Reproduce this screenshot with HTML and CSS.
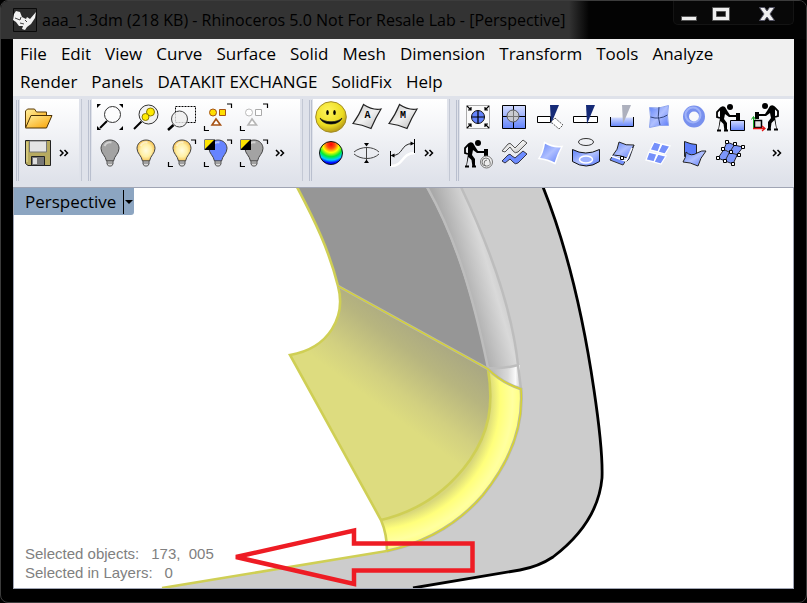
FILE: index.html
```html
<!DOCTYPE html>
<html lang="en">
<head>
<meta charset="utf-8">
<title>aaa_1.3dm (218 KB) - Rhinoceros 5.0</title>
<link rel="stylesheet" href="styles.css">
</head>
<body>
<svg class="defs" aria-hidden="true">
  <defs>
    <linearGradient id="blue" x1="0" y1="0" x2="1" y2="1"><stop offset="0" stop-color="#5f82f8"/><stop offset=".5" stop-color="#b0c0ff"/><stop offset="1" stop-color="#5878f8"/></linearGradient>
    <linearGradient id="blueDown" x1="0" y1="0" x2="0" y2="1"><stop offset="0" stop-color="#d3dcff"/><stop offset="1" stop-color="#6384fb"/></linearGradient>
    <linearGradient id="gray" x1="0" y1="0" x2="1" y2="1"><stop offset="0" stop-color="#c2c2c2"/><stop offset=".5" stop-color="#f2f2f2"/><stop offset="1" stop-color="#b5b5b5"/></linearGradient>
    <linearGradient id="folder" x1="0" y1="0" x2="1" y2="1"><stop offset="0" stop-color="#fff0a0"/><stop offset="1" stop-color="#f8a000"/></linearGradient>
    <radialGradient id="smile" cx=".4" cy=".3" r=".7"><stop offset="0" stop-color="#fff45c"/><stop offset=".7" stop-color="#ecdc20"/><stop offset="1" stop-color="#b99c18"/></radialGradient>
    <radialGradient id="rainbow" cx=".5" cy=".12" r=".9"><stop offset="0" stop-color="#f00"/><stop offset=".2" stop-color="#ff5010"/><stop offset=".4" stop-color="#ff0"/><stop offset=".6" stop-color="#0e3"/><stop offset=".76" stop-color="#0cf"/><stop offset=".9" stop-color="#00f"/></radialGradient>
    <radialGradient id="bulbYellow"><stop offset="0" stop-color="#fffbe0"/><stop offset=".6" stop-color="#fff0a6"/><stop offset="1" stop-color="#f6c55a"/></radialGradient>
    <symbol id="bulb" viewBox="0 0 36 36">
      <path d="M18 5c-5.500 0-9 4-9 8.500 0 5 4.500 7 5.500 12.500h7c1-5.500 5.500-7.500 5.500-12.500C27 9 23.500 5 18 5z" stroke="#444"/>
      <path d="M12.500 11c1.500-3.500 5-4 7-3.500" fill="none" stroke="#fff" stroke-opacity=".5" stroke-width="2"/>
      <path d="M15 26h6v3l-1.500 2h-3L15 29z" fill="#ddd" stroke="#555"/><path d="M15 28h6" stroke="#666"/>
    </symbol>
    <symbol id="corners" viewBox="0 0 36 36"><path d="M27 5h4.500v4M4.500 27v4.500H9" fill="none" stroke="#000" stroke-width="1.200"/></symbol>
    <symbol id="swap" viewBox="0 0 36 36"><path d="M4.500 4.500h10.500v10.500H4.500z" fill="#000"/><path d="M5 5h9l-9 9z" fill="#ffe500"/></symbol>
    <symbol id="worker" viewBox="0 0 36 36">
      <circle cx="18" cy="8" r="3"/>
      <path d="M8 9q2-3 5-1l3 5 2 3h7v2h-8l-4-3-1 5 3 4v8h-2.500l-1-7-3-3-2 10H6l2-13z"/><path d="M9 9l-4 4v5l3 1M5 31.500h4m3 0h4" fill="none" stroke="#000" stroke-width="1.800"/><path d="M24 14h4v7h-4z"/>
    </symbol>
  </defs>
</svg>

<div class="window">
  <header class="titlebar">
    <svg class="app-icon" viewBox="0 0 24 24" aria-hidden="true"><path d="M.5.500h23v23H.500z" fill="#2c2c2c" stroke="#0a0a0a"/><path d="M1 6l2-3 4 1 2 5 4 2 1-2 3 2 6-7-1 6-4 6-4 3-2 3-3-1 1-3-4 0-3-4-3-2z" fill="#f2f2f2"/><path d="M2 10l5 2 1-3M7 15l4 1M12 12l2 2" fill="none" stroke="#444"/></svg>
    <h1 class="title">aaa_1.3dm (218 KB) - Rhinoceros 5.0 Not For Resale Lab - [Perspective]</h1>
    <div class="controls">
      <button aria-label="Minimize"><svg viewBox="0 0 20 16"><path d="M2.500 10.500h15v4h-15z" fill="#eee" stroke="#555"/></svg></button>
      <button aria-label="Maximize"><svg viewBox="0 0 20 16"><path d="M1.500 1.500h17v13h-17zM5.500 5.500v5h9v-5z" fill="#eee" fill-rule="evenodd" stroke="#555"/></svg></button>
      <button class="close" aria-label="Close"><svg viewBox="0 0 20 16"><path d="M2.500 1.500h5L10 5l2.500-3.500h5L13 8l4.500 6.500h-5L10 11l-2.500 3.500h-5L7 8z" fill="#eee" stroke="#556"/></svg></button>
    </div>
  </header>

  <main class="client">
    <nav class="menu" aria-label="Main menu">
      <div class="menu-row"><button>File</button><button>Edit</button><button>View</button><button>Curve</button><button>Surface</button><button>Solid</button><button>Mesh</button><button>Dimension</button><button>Transform</button><button>Tools</button><button>Analyze</button></div>
      <div class="menu-row"><button>Render</button><button>Panels</button><button>DATAKIT EXCHANGE</button><button>SolidFix</button><button>Help</button></div>
    </nav>

    <div class="toolbars">
      <section class="group" aria-label="File tools">
        <div class="panel panel-file">
          <div class="tool-row">
            <button class="tool" aria-label="Open"><svg viewBox="0 0 36 36"><path d="M5.500 28V12l2-2h7l2 3h10v4" fill="url(#folder)" stroke="#5a3b08"/><path d="M11 16.500h21L26.500 29H5.500z" fill="url(#folder)" stroke="#4a3005"/></svg></button>
          </div>
          <div class="tool-row">
            <button class="tool" aria-label="Save"><svg viewBox="0 0 36 36"><path d="M5.500 5.500h25v25H8l-2.500-2z" fill="#b7aa60" stroke="#222"/><path d="M9.500 6h17v11h-17z" fill="#e4e4e4" stroke="#777"/><path d="M11.500 21.500h13v9h-13z" fill="#777" stroke="#222"/><path d="M13 23h4v6h-4z" fill="#ddd"/><path d="M7 7v20" stroke="#eee395"/></svg></button>
            <button class="more" aria-label="More file tools"><svg viewBox="0 0 16 12"><path d="M4 3l3 3-3 3M8.500 3l3 3-3 3"/></svg></button>
          </div>
        </div>
      </section>

      <section class="group" aria-label="View tools">
        <div class="panel panel-view">
          <div class="tool-row">
            <button class="tool" aria-label="Zoom extents"><svg viewBox="0 0 36 36"><path d="M5 5h4l-4 4zM27 5h4v4zM5 27v4h4zM31 27v4h-4z"/><path d="M15 22l-7 7" stroke="#000" stroke-width="2"/><circle cx="20.500" cy="15.500" r="8" fill="#fff" fill-opacity=".6" stroke="#333"/></svg></button>
            <button class="tool" aria-label="Zoom selected"><svg viewBox="0 0 36 36"><path d="M13.500 22.500L6 30" stroke="#000" stroke-width="2"/><circle cx="20.500" cy="15.500" r="9.500" fill="#f1f1f1" stroke="#333"/><circle cx="22.500" cy="13" r="4" fill="#ffeb00" stroke="#8b7a00"/><circle cx="17.500" cy="18" r="3.500" fill="#ffeb00" stroke="#8b7a00"/></svg></button>
            <button class="tool" aria-label="Zoom window"><svg viewBox="0 0 36 36"><path d="M11.500 7.500h20v16h-20z" fill="none" stroke="#000" stroke-dasharray="2 1"/><path d="M9.500 26L4 31" stroke="#000" stroke-width="2.500"/><circle cx="15.500" cy="20" r="8" fill="#eee" fill-opacity=".8" stroke="#444"/></svg></button>
            <button class="tool" aria-label="Select objects"><svg viewBox="0 0 36 36"><circle cx="13" cy="13.500" r="3.500" fill="#ffde00" stroke="#a65315"/><path d="M19.500 10.500h6v6h-6z" fill="#ffde00" stroke="#a65315"/><path d="M16 20l-4 6h8.500z" fill="#fff" stroke="#a65315" stroke-width="1.600"/><use href="#corners"/></svg></button>
            <button class="tool" aria-label="Deselect objects"><svg viewBox="0 0 36 36"><circle cx="13" cy="13.500" r="3.500" fill="#fff" stroke="#bbb"/><path d="M19.500 10.500h6v6h-6z" fill="#fff" stroke="#aaa"/><path d="M16 20l-4 6h8.500z" fill="#fff" stroke="#b5b5b5" stroke-width="1.600"/><use href="#corners"/></svg></button>
          </div>
          <div class="tool-row">
            <button class="tool" aria-label="Hide"><svg viewBox="0 0 36 36" fill="#a3a3a3"><use href="#bulb"/></svg></button>
            <button class="tool" aria-label="Show"><svg viewBox="0 0 36 36" fill="url(#bulbYellow)"><use href="#bulb"/></svg></button>
            <button class="tool" aria-label="Show selected"><svg viewBox="0 0 36 36" fill="url(#bulbYellow)"><use href="#bulb"/><use href="#corners"/></svg></button>
            <button class="tool" aria-label="Swap hidden"><svg viewBox="0 0 36 36" fill="#6684ff"><use href="#bulb"/><use href="#swap"/><use href="#corners"/></svg></button>
            <button class="tool" aria-label="Isolate"><svg viewBox="0 0 36 36" fill="#a3a3a3"><use href="#bulb"/><use href="#swap"/><use href="#corners"/></svg></button>
            <button class="more" aria-label="More view tools"><svg viewBox="0 0 16 12"><path d="M4 3l3 3-3 3M8.500 3l3 3-3 3"/></svg></button>
          </div>
        </div>
      </section>

      <section class="group" aria-label="Analysis tools">
        <div class="panel panel-analysis">
          <div class="tool-row">
            <button class="tool" aria-label="Smiley"><svg viewBox="0 0 36 36"><circle cx="18" cy="18" r="15.300" fill="url(#smile)" stroke="#a28b25"/><ellipse cx="14.500" cy="13.500" rx="1.300" ry="2.500"/><ellipse cx="21.500" cy="13.500" rx="1.300" ry="2.500"/><path d="M7 19c3 8 19 8 22 0-4 5-18 5-22 0z" stroke="#222" stroke-width=".800"/></svg></button>
            <button class="tool" aria-label="Surface A"><svg viewBox="0 0 36 36"><path d="M14.500 5.500q9 6 17.500 4.500-5 8-10 19.500-9-4-18-5 6-8 10.500-19z" fill="url(#gray)" stroke="#222" stroke-width="1.200"/><text x="18.500" y="19" class="glyph">A</text></svg></button>
            <button class="tool" aria-label="Surface M"><svg viewBox="0 0 36 36"><path d="M14.500 5.500q9 6 17.500 4.500-5 8-10 19.500-9-4-18-5 6-8 10.500-19z" fill="url(#gray)" stroke="#222" stroke-width="1.200"/><text x="18" y="19" class="glyph">M</text></svg></button>
          </div>
          <div class="tool-row">
            <button class="tool" aria-label="Color analysis"><svg viewBox="0 0 36 36"><circle cx="18" cy="18" r="11.500" fill="url(#rainbow)" stroke="#111"/></svg></button>
            <button class="tool" aria-label="Thickness"><svg viewBox="0 0 36 36"><path d="M5 17c7-6 19-6 25 0M5 19c7 6 19 6 25 0M17.500 12v13" fill="none" stroke="#444"/><path d="M15 8h5l-2.500 3.500zM15 28h5l-2.500-3.500z"/></svg></button>
            <button class="tool" aria-label="Length"><svg viewBox="0 0 36 36"><path d="M6 31c13 0 10-13 24-13" fill="none" stroke="#fff" stroke-width="2.500"/><path d="M5.500 16v15M29.500 4v14" stroke="#000"/><path d="M7 20.500c12 0 8-12 21-12" fill="none" stroke="#222"/><path d="M5.500 20.500l4-2v4zM29.500 8.500l-4-2v4z"/></svg></button>
            <button class="more" aria-label="More analysis tools"><svg viewBox="0 0 16 12"><path d="M4 3l3 3-3 3M8.500 3l3 3-3 3"/></svg></button>
          </div>
        </div>
      </section>

      <section class="group group-wide" aria-label="Surface tools">
        <div class="panel panel-surface">
          <div class="tool-row">
            <button class="tool" aria-label="Center"><svg viewBox="0 0 36 36"><path d="M6.500 6.500h23v23h-23z" fill="#fafafa" stroke="#aaa"/><circle cx="18" cy="18" r="6.500" fill="#6484fc" stroke="#111"/><path d="M11.500 18h13M18 11.500v13M7 7l4 4m0-3v3H8M29 7l-4 4m0-3v3h3M7 29l4-4m-3 0h3v3M29 29l-4-4m3 0h-3v3" fill="none" stroke="#000" stroke-width="1.200"/></svg></button>
            <button class="tool" aria-label="Split view"><svg viewBox="0 0 36 36"><path d="M6.500 6.500h23v23h-23z" fill="url(#blueDown)" stroke="#000"/><path d="M6 17.500h24M17.500 6v24" stroke="#000"/><circle cx="17" cy="17" r="6" fill="#ccc" fill-opacity=".9" stroke="#555"/><path d="M11 17.500h12M17.500 11v12" stroke="#777"/></svg></button>
            <button class="tool" aria-label="Trim"><svg viewBox="0 0 36 36"><path d="M5.500 17.500h13v6h-13z" fill="#fff" stroke="#000"/><path d="M18 6h9l-8 19z" fill="#152a77"/><path d="M23 19l8 7-4 4-8-7z" fill="#fff" stroke="#555" stroke-dasharray="2 1"/></svg></button>
            <button class="tool" aria-label="Split"><svg viewBox="0 0 36 36"><path d="M5.500 17.500h24v6h-24z" fill="#fff" stroke="#000"/><path d="M18 6h9l-8 19z" fill="#152a77"/></svg></button>
            <button class="tool" aria-label="Untrim"><svg viewBox="0 0 36 36"><path d="M6.500 18.500h23v9h-23z" fill="url(#blueDown)"/><path d="M6.500 18v9.500h23V18" fill="none" stroke="#000"/><path d="M18 6h9l-8 19z" fill="#adb0bd"/></svg></button>
            <button class="tool" aria-label="Surface from curves"><svg viewBox="0 0 36 36"><path d="M9.500 8.500q9 2 19-2-2 10 0 20-9-1-19 2 2-11 0-20z" fill="url(#blue)" stroke="#8fa5ee"/><path d="M19 8q-2 10 1 18M10.500 18q9 3 17-2" fill="none" stroke="#33457a"/></svg></button>
            <button class="tool" aria-label="Torus"><svg viewBox="0 0 36 36"><circle cx="18" cy="17.500" r="8" fill="none" stroke="#7890ee" stroke-width="6"/><circle cx="17" cy="16" r="7.500" fill="none" stroke="#b9c9ff" stroke-opacity=".6" stroke-width="2"/></svg></button>
            <button class="tool" aria-label="Build box"><svg viewBox="0 0 36 36"><use href="#worker"/><path d="M18.500 21.500h14v10h-14z" fill="url(#blueDown)" stroke="#000"/></svg></button>
            <button class="tool" aria-label="Move origin"><svg viewBox="0 0 36 36"><g transform="translate(35 -1) scale(-1 1)"><use href="#worker" width="36" height="36"/></g><path d="M6.500 21.500h7v7h-7z" fill="#e2e2e2" stroke="#000" stroke-width="1.500"/><path d="M5.500 30V18m-2 2.500l2-3 2 3" fill="none" stroke="#18a825"/><path d="M5 29.500h12m-3-2.500l3 2.500-3 2.500" fill="none" stroke="#e31313" stroke-width="1.300"/></svg></button>
          </div>
          <div class="tool-row">
            <button class="tool" aria-label="Drill"><svg viewBox="0 0 36 36"><use href="#worker"/><circle cx="26.500" cy="27" r="6" fill="#eee" stroke="#777"/><path d="M26 31a4 4 0 1 1 4-4a3 3 0 1 1-3-2" fill="none" stroke="#777"/></svg></button>
            <button class="tool" aria-label="Match"><svg viewBox="0 0 36 36"><path d="M6 16l6-7q2-2 4 1l3 3 8-8 4 3-9 9q-3 2-5-1l-3-4-5 5z" fill="url(#gray)" stroke="#555"/><path d="M6 26l6-6q2-2 4 1l3 2 8-7 4 3-9 9q-3 2-5-1l-3-3-5 4z" fill="#6d8cff" stroke="#334"/></svg></button>
            <button class="tool" aria-label="Patch"><svg viewBox="0 0 36 36"><path d="M12.500 7.500q8 5 17.500 4-4 7-7 17-7-4-16-5 4-6 5.500-16z" fill="url(#blue)" stroke="#fff" stroke-width="1.500"/></svg></button>
            <button class="tool" aria-label="Project curve"><svg viewBox="0 0 36 36"><ellipse cx="18" cy="7" rx="7.500" ry="3.500" fill="none" stroke="#333"/><path d="M4.500 14.500q13 7 27 0v12q-13 9-27 0z" fill="url(#blue)" stroke="#111"/><ellipse cx="18" cy="24.500" rx="6.500" ry="3.500" fill="#9db1ff" stroke="#fff" stroke-width="1.500"/></svg></button>
            <button class="tool" aria-label="Blend surface"><svg viewBox="0 0 36 36"><path d="M15 7q7 4 15 3l-7 13q-7-3-14-3 5-5 6-13z" fill="url(#blue)" stroke="#222"/><path d="M9 20l-3 5 13 5 3-5M30 10l-5 14-3 3" fill="#7390fa" stroke="#333"/><path d="M7 21l15 5 6-13" fill="none" stroke="#fff" stroke-width="1.500"/><path d="M16.500 21.500h3v3h-3z" fill="#fff" stroke="#000"/></svg></button>
            <button class="tool" aria-label="Split patches"><svg viewBox="0 0 36 36"><path d="M14 7l7 2-3 8-8-2zM22 9l8 2-5 8-7-2zM9 17l8 2-3 8-8-2zM18 19l8 2-5 8-7-2z" fill="#7590fb" stroke="#fff" stroke-width="1.300"/></svg></button>
            <button class="tool" aria-label="Fold surface"><svg viewBox="0 0 36 36"><path d="M8.500 6.500q7 3 12 3v12H8.500z" fill="#5d7efb" stroke="#222"/><path d="M10 17q5 5 11 1 5-3 9-2-6 7-8 15-8-4-15-4 3-4 3-10z" fill="url(#blue)" stroke="#222"/></svg></button>
            <button class="tool" aria-label="Control points"><svg viewBox="0 0 36 36"><path d="M15 7q8 4 16 5-6 6-10 17-8-3-15-6 6-7 9-16zM11 14q8 5 16 6M23 9q-6 8-10 17" fill="#7c96fb" stroke="#223"/><path d="M13.500 5.500h3v3h-3zM21.500 7.500h3v3h-3zM29.500 10.500h3v3h-3zM9.500 12.500h3v3h-3zM17.500 15.500h3v3h-3zM25.500 18.500h3v3h-3zM4.500 21.500h3v3h-3zM11.500 24.500h3v3h-3zM19.500 27.500h3v3h-3z" fill="#fff" stroke="#000"/></svg></button>
            <button class="more more-end" aria-label="More surface tools"><svg viewBox="0 0 16 12"><path d="M4 3l3 3-3 3M8.500 3l3 3-3 3"/></svg></button>
          </div>
        </div>
      </section>
    </div>

    <section class="viewport" aria-label="Perspective viewport">
      <svg class="scene" viewBox="14 188 779 400" preserveAspectRatio="xMinYMin slice" aria-hidden="true">
        <defs>
          <linearGradient id="face" gradientUnits="userSpaceOnUse" x1="430" y1="326" x2="374" y2="402"><stop offset="0" stop-color="#a8a683"/><stop offset=".35" stop-color="#b7b57f"/><stop offset=".75" stop-color="#d2d080"/><stop offset="1" stop-color="#dddc7f"/></linearGradient>
          <linearGradient id="band" gradientUnits="userSpaceOnUse" x1="458" y1="278" x2="499" y2="266"><stop offset="0" stop-color="#a9a9a9"/><stop offset=".4" stop-color="#c3c3c3"/><stop offset=".75" stop-color="#d9d9d9"/><stop offset="1" stop-color="#cbcbcb"/></linearGradient>
          <linearGradient id="bandEnd" gradientUnits="userSpaceOnUse" x1="490" y1="375" x2="520" y2="375"><stop offset="0" stop-color="#b5b5b5"/><stop offset=".6" stop-color="#dadada"/><stop offset=".85" stop-color="#fafafa"/><stop offset="1" stop-color="#d0d0d0"/></linearGradient>
          <radialGradient id="fillet" gradientUnits="userSpaceOnUse" cx="368" cy="398" r="154"><stop offset=".79" stop-color="#d8d77a"/><stop offset=".86" stop-color="#ffff7b"/><stop offset=".94" stop-color="#ffffa0"/><stop offset="1" stop-color="#ffff7c"/></radialGradient>
        </defs>
        <path d="M426 187H543C567 247 583 315 594 390C598 417 603 454 602 478C599 512 578 538 553 557C541 565 531 568 520 570L413 588H162L387 551L520 390V365L488 368z" fill="#ccc"/>
        <path d="M297 187H426C456 240 473 300 488 368L338 286C329 250 315 221 297 187z" fill="#969696"/>
        <path d="M426 187H461C490 248 512 308 518 365Q504 369 488 368C473 300 456 240 426 187z" fill="url(#band)"/>
        <path d="M488 369Q504 369 518 365L521 389Q502 383 488 369z" fill="url(#bandEnd)"/>
        <path d="M338 286L488 369C494 406 489 432 470 460C448 491 419 511 381 520L290 355C330 348 346 316 338 286z" fill="url(#face)"/>
        <path d="M488 369Q502 383 521 389C524 428 509 463 483 495C458 524 424 543 387 551Q387 534 381 520C419 511 448 491 470 460C489 432 494 406 488 369z" fill="url(#fillet)"/>
        <path d="M427 187C457 240 474 300 488 368Q504 369 518 365M461 187C490 248 512 308 518 365L521 389" fill="none" stroke="#bdbdbd" stroke-width="2.500"/>
        <path d="M297 187C315 221 329 250 338 286C346 316 330 348 290 355L381 520Q387 534 387 551L162 588M488 369C494 406 489 432 470 460C448 491 419 511 381 520" fill="none" stroke="#cfcf55" stroke-width="2.600"/>
        <path d="M338 286L488 369Q502 383 521 389C524 428 509 463 483 495C458 524 424 543 387 551" fill="none" stroke="#b9b9a0" stroke-width="3"/>
        <path d="M338 286L488 369Q502 383 521 389C524 428 509 463 483 495C458 524 424 543 387 551" fill="none" stroke="#d9d52b" stroke-width="1.400"/>
        <path d="M543 187C567 247 583 315 594 390C598 417 603 454 602 478C599 512 578 538 553 557C541 565 531 568 520 570L413 588" fill="none" stroke="#000" stroke-width="2.800"/>
        <path d="M236 557L354 530.500V543.500H472.500V570.500H354V584z" fill="none" stroke="#ee1c24" stroke-width="4.500"/>
      </svg>
      <button class="view-tab"><span class="view-name">Perspective</span><span class="view-arrow"></span></button>
      <div class="status">
        <p><span>Selected objects:</span><span>173,&nbsp; 005</span></p>
        <p><span>Selected in Layers:</span><span>0</span></p>
      </div>
    </section>
  </main>
</div>
</body>
</html>
```
FILE: styles.css
```css
* { box-sizing: border-box; }

body {
  margin: 0;
  background: #000;
  color: #000;
  font-family: "Open Sans", "Noto Sans", sans-serif;
  font-size: 17px;
}

button {
  padding: 0;
  border: 0;
  background: none;
  color: inherit;
  font: inherit;
}

svg { display: block; }

.defs { position: absolute; width: 0; height: 0; }

.window {
  display: flex;
  flex-direction: column;
  min-height: 100vh;
  padding: 0 12px 13px;
  border: 1px solid #3c3c3c;
  border-radius: 8px;
  background: #000;
}

.titlebar {
  display: flex;
  align-items: center;
  height: 38px;
  margin: 0 -12px;
  padding-left: 12px;
  border-radius: 7px 7px 0 0;
  background: linear-gradient(90deg, #333 0, #333 568px, #030303 588px);
}

.app-icon { width: 24px; height: 24px; flex: none; }

.title {
  flex: 1;
  margin: 0 0 0 5px;
  overflow: hidden;
  font-size: 16px;
  font-weight: 400;
  line-height: 24px;
  white-space: nowrap;
}

.controls {
  display: flex;
  align-self: flex-start;
  gap: 12px;
  height: 24px;
  margin-right: 12px;
  padding: 3px 16px 0 5px;
  border: 1px solid #141414;
  border-top: 0;
  border-radius: 0 0 5px 5px;
  background: #080808;
}

.controls svg { width: 20px; height: 16px; }
.controls .close { margin-left: 14px; }

.client { display: flex; flex: 1; flex-direction: column; background: #dfe2ea; }

.menu { padding: 1px 7px 0; background: #f0f0f0; }
.menu-row { display: flex; flex-wrap: wrap; gap: 0 14px; }
.menu button { line-height: 28px; }

.toolbars {
  display: flex;
  height: 92px;
  padding: 3px 0 6px 3px;
  border-bottom: 1px solid #a0a5b4;
}

.group {
  display: flex;
  margin-right: 6px;
  padding-right: 2px;
  border-right: 1px solid #c3c8d4;
}

.group::before {
  width: 4px;
  margin: 1px 0 0;
  background: linear-gradient(90deg, #b9bfce 1px, transparent 1px 2px, #b9bfce 2px 3px, transparent 3px);
  content: "";
}

.group-wide { flex: 1; margin-right: 0; padding-right: 1px; border-right: 0; }

.panel { background: linear-gradient(#fff, #dfe2ea); }
.panel-file { padding-right: 7px; }
.panel-view { padding-right: 12px; }
.panel-analysis { padding-right: 10px; }
.panel-surface { flex: 1; padding-right: 8px; }

.tool-row { display: flex; }
.tool, .tool svg { width: 36px; height: 36px; flex: none; }
.more svg { width: 16px; height: 12px; fill: none; stroke: #000; stroke-width: 1.5; }
.more-end { margin-left: auto; }

.glyph { font: bold 10px "Liberation Mono", monospace; text-anchor: middle; }

.viewport {
  position: relative;
  flex: 1;
  min-height: 320px;
  overflow: hidden;
  border: 1px solid #a0a5b4;
  border-top: 0;
  background: #fff;
}

.scene { position: absolute; inset: 0; width: 100%; height: 100%; }

.view-tab {
  position: absolute;
  top: 0;
  left: 0;
  display: flex;
  align-items: center;
  height: 27px;
  padding-left: 11px;
  border-radius: 0 0 3px 0;
  background: #8ca5c1;
}

.view-name { padding-right: 7px; }

.view-arrow {
  display: flex;
  align-items: center;
  width: 11px;
  height: 24px;
  padding-left: 1px;
  border-left: 1px solid #000;
}

.view-arrow::after {
  border: 4px solid transparent;
  border-top-color: #000;
  border-bottom: 0;
  content: "";
}

.status {
  position: absolute;
  bottom: 6px;
  left: 11px;
  color: #808080;
  font-family: "Liberation Sans", Arial, sans-serif;
  font-size: 15px;
  line-height: 19px;
}

.status p { display: flex; gap: 12px; margin: 0; }
```
